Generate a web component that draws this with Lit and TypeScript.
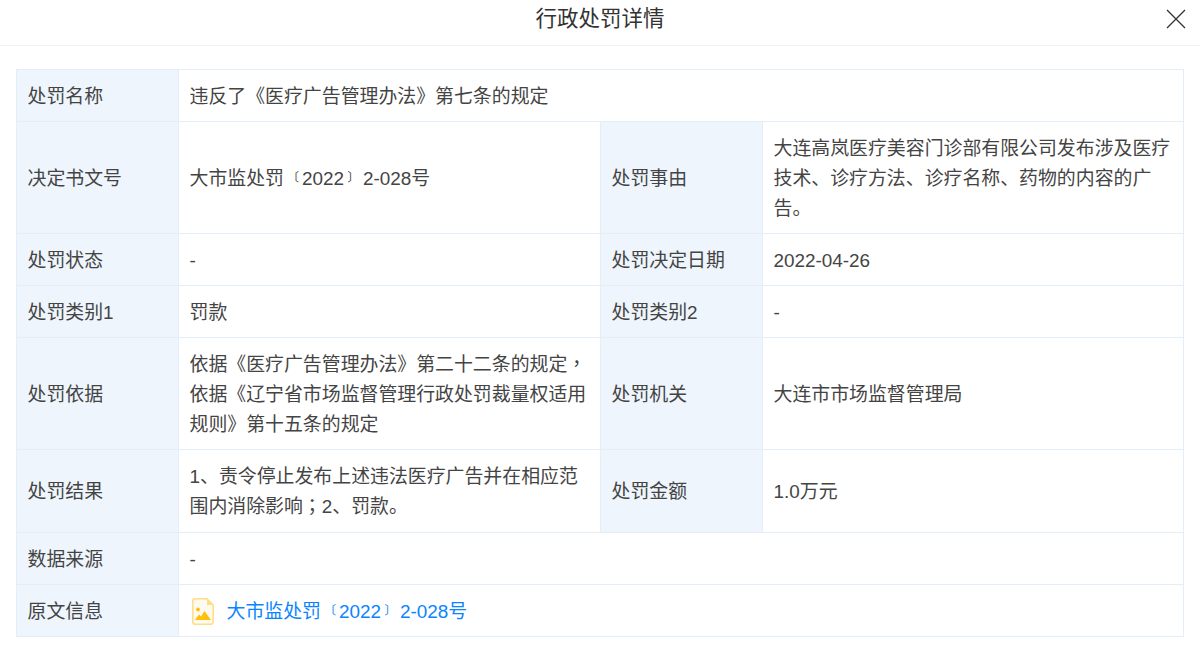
import { LitElement, html, css } from "lit";
import { customElement } from "lit/decorators.js";

const docNo = html`大市监处罚<span class="b l">〔</span>2022<span class="b r">〕</span>2-028号`;

@customElement("app-root")
export class AppRoot extends LitElement {
  static styles = css`
    :host { display: block; width: 1200px; height: 651px; background: #fff; overflow: hidden;
      font-family: "Liberation Sans", "Noto Sans CJK SC", sans-serif; color: #333; }
    .head { height: 45px; border-bottom: 1px solid #f0f2f5; display: flex; align-items: center; justify-content: center; position: relative; }
    .title { font-size: 21.5px; line-height: 38px; margin-top: -7px; color: #333; }
    .close { position: absolute; left: 1166px; top: 9px; width: 20px; height: 20px; }
    .body { padding: 23px 16px 0; }
    table { border-collapse: collapse; width: 1167px; table-layout: fixed; }
    .c1 { width: 162px; }
    .c2 { width: 422px; }
    .c3 { width: 421px; }
    td { border: 1px solid #e4eef8; padding: 12px 10px 9.1px 10.5px; line-height: 30px; vertical-align: middle; font-size: 18.9px; color: #444; word-break: break-all; }
    td.lab { background: #eef5fc; }
    .p { font-family: "Noto Sans CJK TC", sans-serif; line-height: 0; }
    .b { display: inline-block; line-height: 0; font-size: 12px; text-align: center; vertical-align: baseline; position: relative; top: -3px; }
    .b.l { width: 18px; }
    .b.r { width: 19px; }
    .link { display: flex; align-items: center; gap: 13px; color: #0a84ff; }
    .link svg { display: block; margin-left: 2px; }
  `;

  render() {
    return html`
      <div class="head">
        <div class="title">行政处罚详情</div>
        <svg class="close" viewBox="0 0 20 20"><path d="M1 1L19 19M19 1L1 19" stroke="#333" stroke-width="1.3" fill="none"/></svg>
      </div>
      <div class="body">
        <table>
          <colgroup><col class="c1"/><col class="c2"/><col class="c1"/><col class="c3"/></colgroup>
          <tr><td class="lab">处罚名称</td><td colspan="3">违反了《医疗广告管理办法》第七条的规定</td></tr>
          <tr><td class="lab">决定书文号</td><td>${docNo}</td><td class="lab">处罚事由</td><td>大连高岚医疗美容门诊部有限公司发布涉及医疗技术、诊疗方法、诊疗名称、药物的内容的广告。</td></tr>
          <tr><td class="lab">处罚状态</td><td>-</td><td class="lab">处罚决定日期</td><td>2022-04-26</td></tr>
          <tr><td class="lab">处罚类别1</td><td>罚款</td><td class="lab">处罚类别2</td><td>-</td></tr>
          <tr><td class="lab">处罚依据</td><td>依据《医疗广告管理办法》第二十二条的规定<span class="p">，</span>依据《辽宁省市场监督管理行政处罚裁量权适用规则》第十五条的规定</td><td class="lab">处罚机关</td><td>大连市市场监督管理局</td></tr>
          <tr><td class="lab">处罚结果</td><td>1、责令停止发布上述违法医疗广告并在相应范围内消除影响<span class="p">；</span>2、罚款。</td><td class="lab">处罚金额</td><td>1.0万元</td></tr>
          <tr><td class="lab">数据来源</td><td colspan="3">-</td></tr>
          <tr><td class="lab">原文信息</td><td colspan="3"><div class="link">
            <svg width="22" height="27" viewBox="0 0 22 27"><path d="M3 .8H15L21.2 7V24a2.2 2.2 0 0 1-2.2 2.2H3A2.2 2.2 0 0 1 .8 24V3A2.2 2.2 0 0 1 3 .8z" fill="#fffaf0" stroke="#ffdc85" stroke-width="1.5"/><path d="M15 .8V7H21.2z" fill="#ffdc85"/><circle cx="6" cy="11.5" r="1.9" fill="#ffc107"/><path d="M3 22L7 16.5 9 18.5 12.5 13 19 22z" fill="#ffc107"/></svg>
            <span>${docNo}</span></div></td></tr>
        </table>
      </div>`;
  }
}
